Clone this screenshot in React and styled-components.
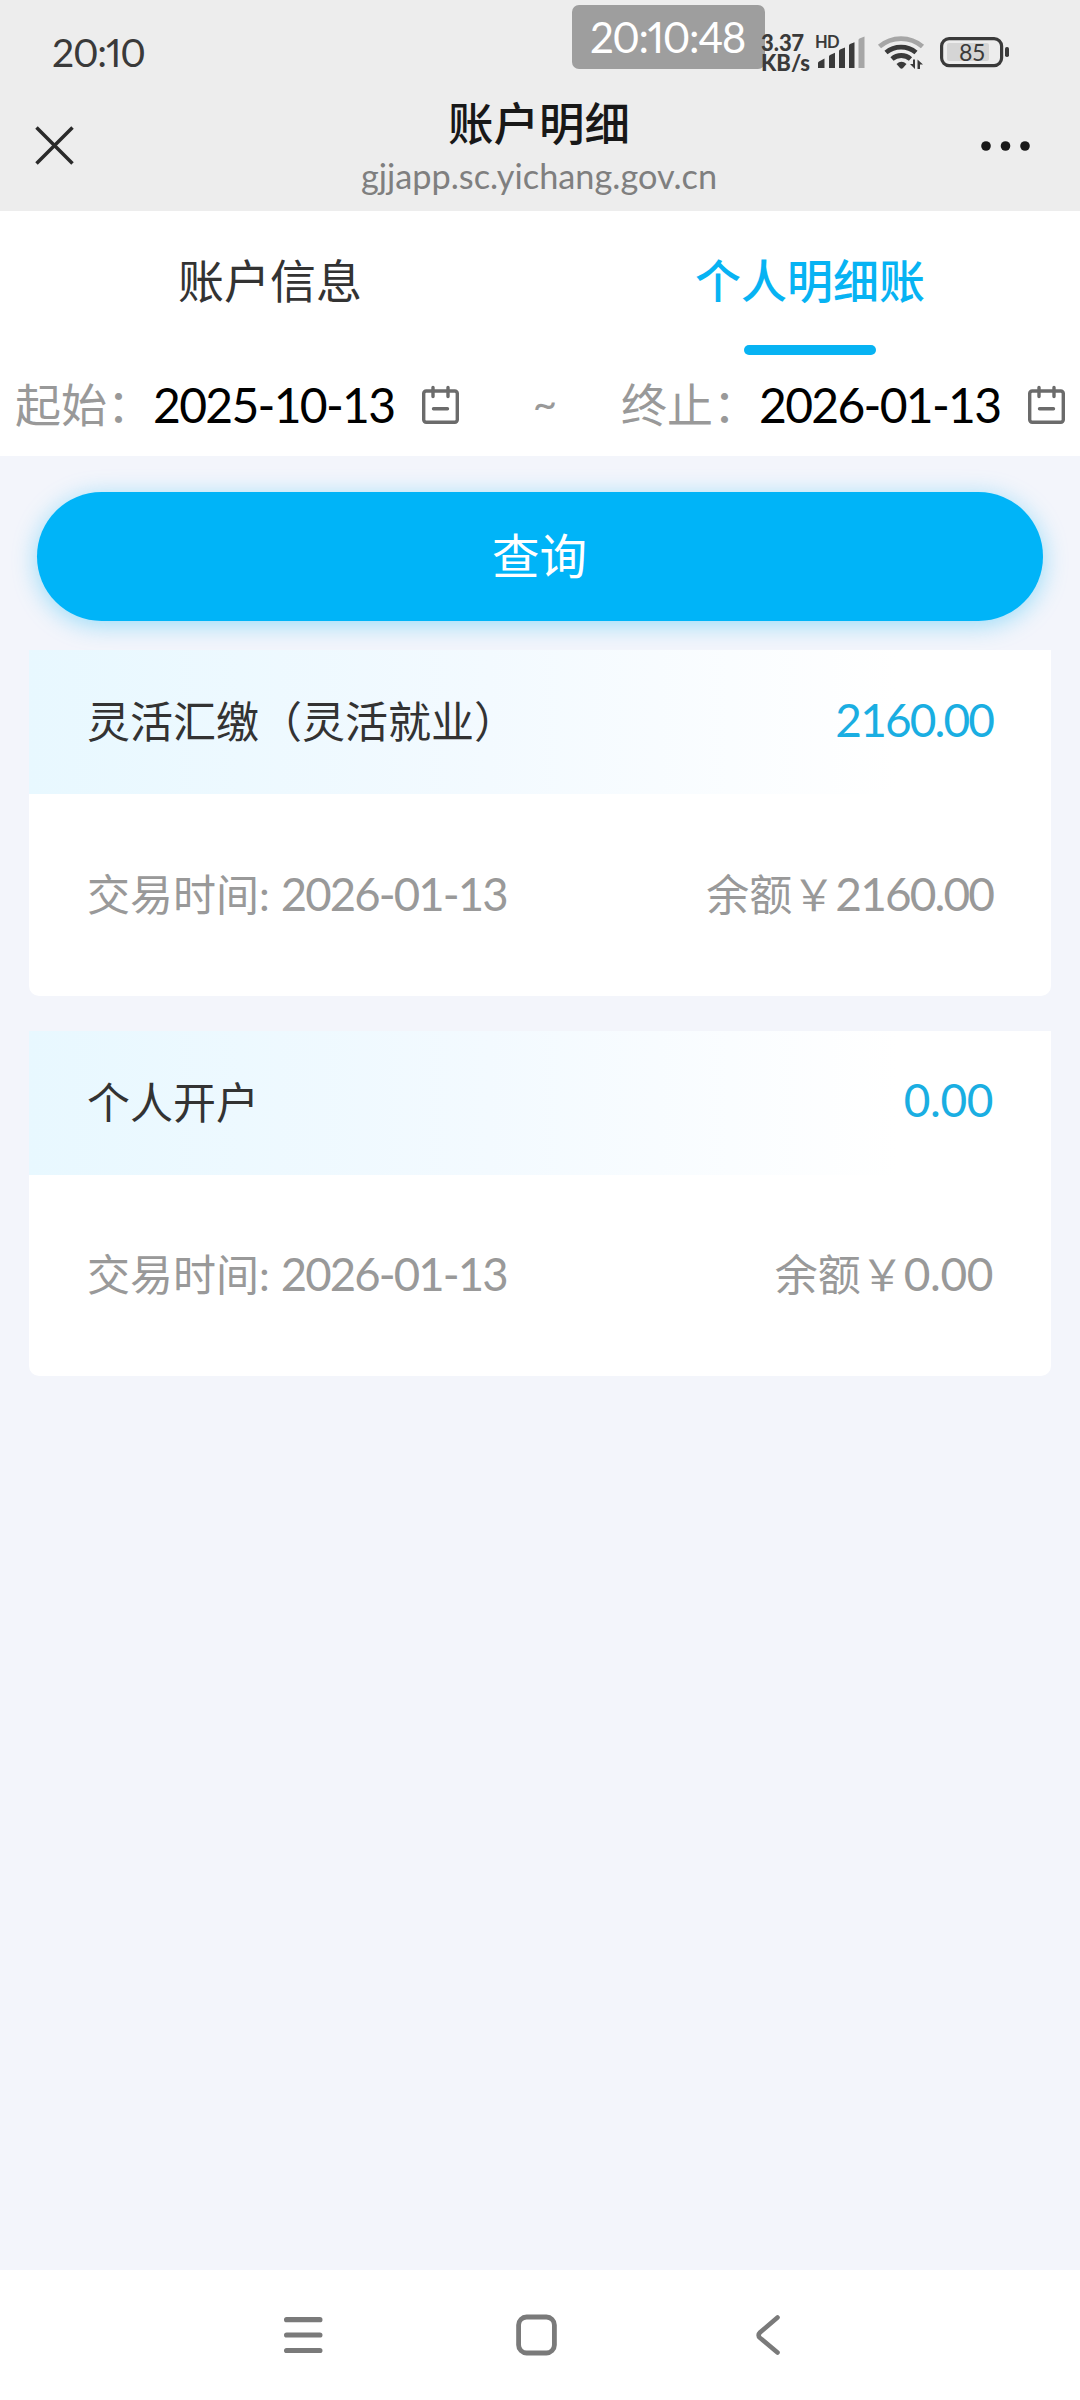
import styled, { createGlobalStyle } from 'styled-components';

/* ---------------------------------- style --------------------------------- */
const GlobalStyle = createGlobalStyle`
  * {
    box-sizing: border-box;
  }
  body {
    margin: 0;
    background: #f3f5fb;
    font-family: Lato, 'Noto Sans CJK SC', sans-serif;
  }
  svg {
    display: block;
    flex-shrink: 0;
    overflow: visible;
  }
`;
const Page = styled.div`
  display: flex;
  flex-direction: column;
  width: 1080px;
  height: 2400px;
  overflow: hidden;
  background: #f3f5fb;
`;
const TopBar = styled.header`
  position: relative;
  height: 211px;
  background: #ededed;
  font-variant-numeric: proportional-nums;
`;
const StatusBar = styled.div`
  display: flex;
  justify-content: space-between;
  height: 88px;
  padding: 0 70px 0 52px;
  color: #3a3a3a;
`;
const Clock = styled.div`
  font-size: 39px;
  line-height: 48px;
  padding-top: 28px;
  letter-spacing: -1.2px;
`;
const StatusIcons = styled.div`
  position: relative;
  z-index: 1;
  display: flex;
  align-items: flex-start;
  padding-top: 33px;
`;
const NetSpeed = styled.div`
  width: 53px;
  margin-right: 1px;
  font-size: 22px;
  line-height: 19.5px;
  font-weight: 900;
  white-space: nowrap;
`;
const TimeBadge = styled.div`
  position: absolute;
  left: 572px;
  top: 5px;
  width: 193px;
  height: 64px;
  padding-right: 2px;
  border-radius: 7px;
  background: #9e9e9e;
  color: #fff;
  font-size: 42px;
  line-height: 65px;
  text-align: center;
  letter-spacing: -1.4px;
`;
const TitleBar = styled.div`
  display: grid;
  grid-template-columns: 110px 1fr 110px;
  height: 123px;
`;
const IconCell = styled.div`
  display: flex;
  align-items: center;
  justify-content: ${(props) => (props.$end ? 'flex-end' : 'flex-start')};
  padding: ${(props) => (props.$end ? '0 50px 8px 0' : '0 0 8px 35px')};
`;
const TitleText = styled.div`
  text-align: center;
  h1 {
    margin: 0 2px 0 0;
    padding-top: 3px;
    color: #181818;
    font-size: 45.5px;
    line-height: 66px;
    font-weight: 500;
  }
  p {
    margin: -1px 2px 0 0;
    color: #7f7f7f;
    font-size: 34.3px;
    line-height: 40px;
  }
`;
const FilterPanel = styled.section`
  height: 245px;
  background: #fff;
`;
const Tabs = styled.nav`
  display: grid;
  grid-template-columns: 1fr 1fr;
  height: 144px;
`;
const Tab = styled.div`
  display: flex;
  flex-direction: column;
  align-items: center;
  justify-content: space-between;
  padding-top: 36px;
  font-size: 46px;
  line-height: 68px;
  color: ${(props) => (props.$active ? '#07b3f3' : '#333')};
  font-weight: ${(props) => (props.$active ? 500 : 400)};
  &::after {
    content: '';
    width: 132px;
    height: 10px;
    border-radius: 5px;
    background: ${(props) => (props.$active ? '#07b3f3' : 'transparent')};
  }
`;
const DateRow = styled.div`
  display: flex;
  align-items: center;
  height: 100px;
  padding: 0 15px;
`;
const DateField = styled.label`
  display: flex;
  align-items: center;
  width: 444px;
`;
const DateLabel = styled.span`
  width: 138px;
  padding-bottom: 7px;
  color: #999;
  font-size: 46px;
  white-space: nowrap;
`;
const DateValue = styled.span`
  width: 269px;
  padding-bottom: 2px;
  color: #000;
  font-size: 48px;
  letter-spacing: -1.7px;
  white-space: nowrap;
`;
const Tilde = styled.span`
  flex: 1;
  padding: 0 0 5px 10px;
  color: #999;
  font-size: 42px;
  text-align: center;
`;
const Content = styled.main`
  flex: 1;
  padding: 36px 29px 0;
`;
const QueryButton = styled.button`
  display: block;
  width: 1006px;
  height: 129px;
  margin: 0 8px 29px;
  padding: 0 1px 6px 0;
  border: none;
  border-radius: 65px;
  background: #00b4f8;
  box-shadow: 0 4px 24px rgba(0, 180, 248, 0.38);
  color: #fff;
  font: inherit;
  font-size: 47.5px;
`;
const Card = styled.article`
  height: 345.5px;
  margin-bottom: 35px;
  border-radius: 0 0 10px 10px;
  background: #fff;
`;
const CardRow = styled.div`
  display: flex;
  align-items: center;
  justify-content: space-between;
  padding: 0 58px 6px;
  font-size: 43px;
`;
const CardHead = styled(CardRow)`
  height: 144px;
  color: #333;
  background: linear-gradient(90deg, #e8f8ff 0%, #f3faff 45%, #fff 85%);
`;
const CardBody = styled(CardRow)`
  height: 201px;
  color: #999;
`;
const Num = styled.span`
  color: ${(props) => (props.$accent ? '#1aaee2' : 'inherit')};
  font-size: 46px;
  letter-spacing: ${(props) => (props.$short ? '-0.4px' : '-1.9px')};
`;
const TradeDate = styled.span`
  font-size: 45.5px;
  letter-spacing: -1.9px;
`;
const NavBar = styled.footer`
  display: flex;
  height: 130px;
  padding-left: 283px;
  gap: 193px;
  align-items: center;
  background: #fff;
`;
/* ---------------------------------- icons --------------------------------- */
const CalendarIcon = () => (
  <svg width="37" height="38" viewBox="0 0 37 38" fill="none" stroke="#6b6b6b" strokeWidth="3.4">
    <rect x="1.7" y="5" width="33.6" height="31.3" rx="2.5" />
    <path d="M11 1.5v9M26 1.5v9M11.5 22.7h14" strokeLinecap="round" />
  </svg>
);
const SignalIcon = () => (
  <svg width="63" height="40" viewBox="0 0 63 40" fill="#3a3a3a">
    <text x="0" y="15" fontSize="16.5" fontWeight="700" letterSpacing="-0.8">HD</text>
    <path d="M3 35v-5q0-1 1-1.6l5.500-2.800V35zM14 35V23.500q0-1 1-1.500l5-2.300V35zM24 35V18q0-1 1-1.500l5-2V35zM34 35V12.500q0-1 1-1.500l4.500-1.700V35z" />
    <path d="M43.500 35V7q0-1 1-1.500l5-2V35z" fill="#a6a6a6" />
  </svg>
);
const WifiIcon = () => (
  <svg width="48" height="36" viewBox="0 0 48 36" fill="none" strokeWidth="4.8">
    <path d="M1.500 13.500a33 33 0 0 1 43 0" stroke="#a6a6a6" />
    <path d="M8 19.500a23.500 23.500 0 0 1 30 0M14 26a14 14 0 0 1 18.500 0" stroke="#3a3a3a" />
    <path d="M18.500 31q5-4.500 10 0l-3.500 4q-1.500 1.300-3 0z" fill="#3a3a3a" />
    <path d="M32 31h3v-4.500h2V36zM39.500 26.500l5.500 5h-3V36h-2.500z" fill="#3a3a3a" />
  </svg>
);
const BatteryIcon = () => (
  <svg width="84" height="38" viewBox="-14 0 84 38">
    <rect x="1.6" y="5.6" width="60" height="27" rx="7.5" fill="none" stroke="#3a3a3a" strokeWidth="3.2" />
    <rect x="7" y="10" width="42" height="18" rx="2" fill="#d5d5d5" />
    <rect x="65" y="14" width="4" height="10" rx="1.8" fill="#3a3a3a" />
    <text x="32" y="28" fontSize="23" textAnchor="middle" fill="#3a3a3a">85</text>
  </svg>
);
/* -------------------------------- component ------------------------------- */
const records = [
  { title: '灵活汇缴（灵活就业）', amount: '2160.00', date: '2026-01-13', balance: '2160.00' },
  { title: '个人开户', amount: '0.00', date: '2026-01-13', balance: '0.00' },
];

const RecordCard = ({ record }) => (
  <Card>
    <CardHead>
      <span>{record.title}</span>
      <Num $accent $short={record.amount.length < 6}>
        {record.amount}
      </Num>
    </CardHead>
    <CardBody>
      <span>
        交易时间: <TradeDate>{record.date}</TradeDate>
      </span>
      <span>
        余额￥<Num $short={record.balance.length < 6}>{record.balance}</Num>
      </span>
    </CardBody>
  </Card>
);

const App = () => {
  return (
    <Page>
      <GlobalStyle />
      <TopBar>
        <StatusBar>
          <Clock>20:10</Clock>
          <StatusIcons>
            <NetSpeed>
              3.37
              <br />
              KB/s
            </NetSpeed>
            <SignalIcon />
            <WifiIcon />
            <BatteryIcon />
          </StatusIcons>
        </StatusBar>
        <TimeBadge>20:10:48</TimeBadge>
        <TitleBar>
          <IconCell>
            <svg width="39" height="39" viewBox="0 0 39 39" stroke="#2a2a2a" strokeWidth="3.5">
              <path d="M1.500 1.500l36 36M37.500 1.500l-36 36" />
            </svg>
          </IconCell>
          <TitleText>
            <h1>账户明细</h1>
            <p>gjjapp.sc.yichang.gov.cn</p>
          </TitleText>
          <IconCell $end>
            <svg width="49" height="10" viewBox="0 0 49 10" fill="#181818">
              <circle cx="5" cy="5" r="4.8" />
              <circle cx="24.5" cy="5" r="4.8" />
              <circle cx="44" cy="5" r="4.8" />
            </svg>
          </IconCell>
        </TitleBar>
      </TopBar>

      <FilterPanel>
        <Tabs>
          <Tab>账户信息</Tab>
          <Tab $active>个人明细账</Tab>
        </Tabs>
        <DateRow>
          <DateField>
            <DateLabel>起始：</DateLabel>
            <DateValue>2025-10-13</DateValue>
            <CalendarIcon />
          </DateField>
          <Tilde>~</Tilde>
          <DateField>
            <DateLabel>终止：</DateLabel>
            <DateValue>2026-01-13</DateValue>
            <CalendarIcon />
          </DateField>
        </DateRow>
      </FilterPanel>

      <Content>
        <QueryButton>查询</QueryButton>
        {records.map((record) => (
          <RecordCard key={record.title} record={record} />
        ))}
      </Content>

      <NavBar>
        <svg width="40" height="42" viewBox="0 0 40 42" stroke="#7a7a7a" strokeWidth="5.2" strokeLinecap="round">
          <path d="M3.600 5.700h33.300M3.600 21h33.300M3.600 36.500h33.300" />
        </svg>
        <svg width="41" height="42" viewBox="0 0 41 42" fill="none" stroke="#7a7a7a" strokeWidth="4.8">
          <rect x="2.6" y="3" width="35.8" height="36" rx="8" />
        </svg>
        <svg width="30" height="42" viewBox="-2 0 30 42" fill="none" stroke="#7a7a7a" strokeWidth="4.6" strokeLinecap="round">
          <path d="M25.500 3.500L8 18.500q-2.800 2.700 0 5.400L25.500 38.500" />
        </svg>
      </NavBar>
    </Page>
  );
};

export default App;
